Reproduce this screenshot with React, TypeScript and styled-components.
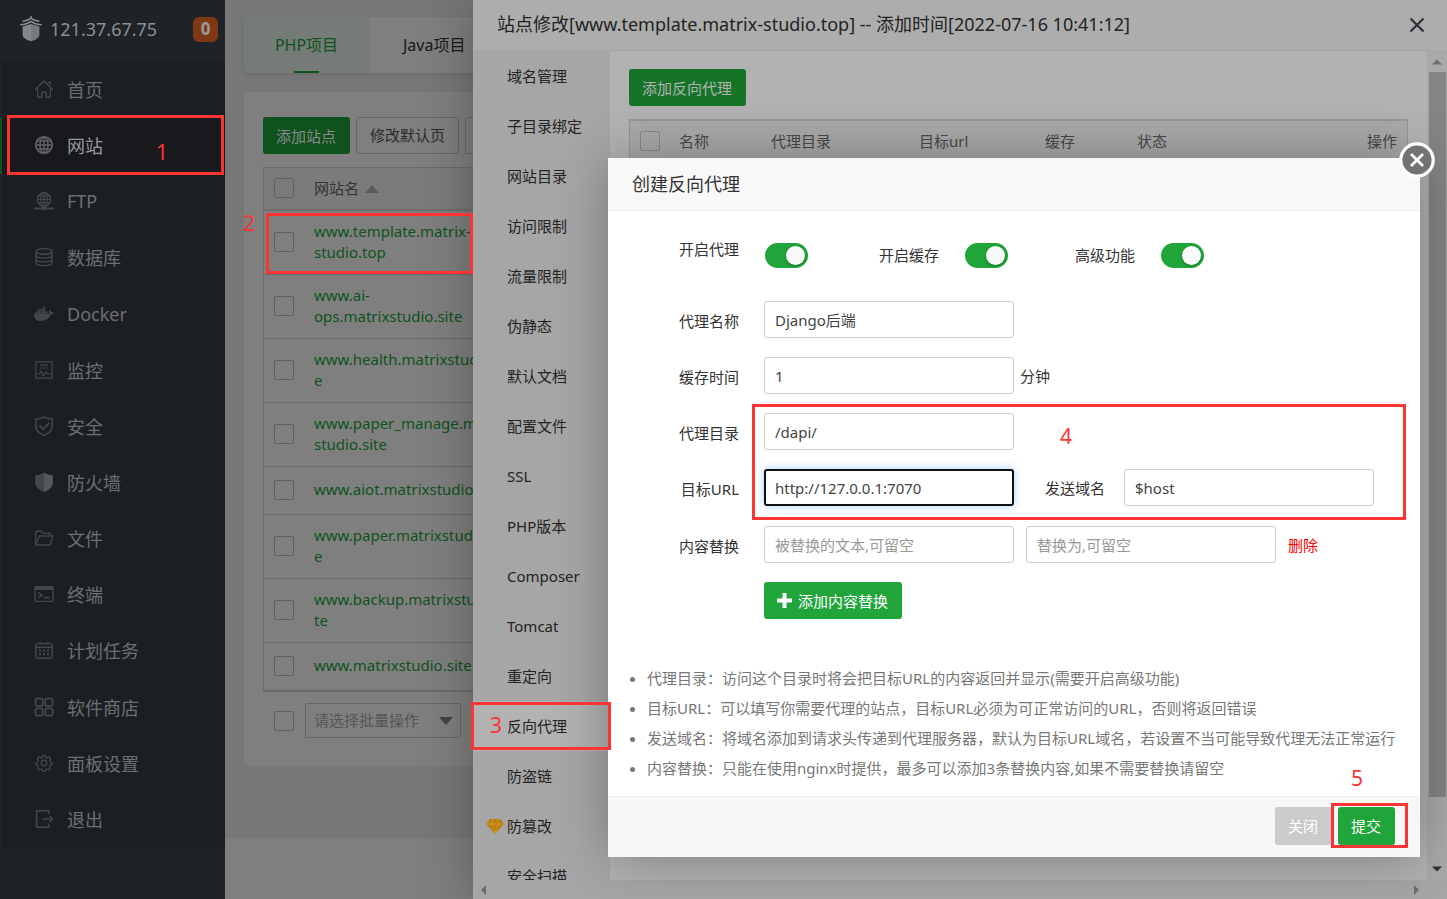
import React from "react";
import styled, { createGlobalStyle, css } from "styled-components";
import { FaDocker } from "react-icons/fa";

const GlobalStyle = createGlobalStyle`
  * { box-sizing: border-box; }
  body { margin: 0; background: #7f7f7f; }
  body, button, input, select {
    font-family: "Noto Sans", "Noto Sans CJK SC", sans-serif;
    font-size: 15px;
  }
  a { text-decoration: none; }
  ul { list-style: none; margin: 0; padding: 0; }
`;

const Screen = styled.div`
  position: relative;
  display: flex;
  height: 100vh;
  min-height: 860px;
  overflow: hidden;
`;

/* ---------- annotations ---------- */

const Frame = styled.span<{ $inset: string }>`
  position: absolute;
  z-index: 20;
  inset: ${(p) => p.$inset};
  border: 3px solid #fb3434;
  pointer-events: none;
`;

const Step = styled.span<{ $left: number; $top: number }>`
  position: absolute;
  z-index: 20;
  left: ${(p) => p.$left}px;
  top: ${(p) => p.$top}px;
  color: #fb3434;
  font-size: 21px;
  line-height: 28px;
  pointer-events: none;
`;

/* ---------- shared controls ---------- */

const Button = styled.button<{ $tone?: "green" | "greenMid" | "greenDark" | "grey" | "outline" }>`
  display: inline-flex;
  align-items: center;
  gap: 6px;
  height: 37px;
  padding: 0 14px 1px 13px;
  border: 0;
  border-radius: 3px;
  white-space: nowrap;
  color: #fff;
  background: #20a53a;
  ${(p) => p.$tone === "grey" && css`background: #cbcbcb;`}
  ${(p) => p.$tone === "greenMid" && css`background: #167429; color: #b2b2b2;`}
  ${(p) => p.$tone === "greenDark" && css`background: #10521d; color: #8a8a8a;`}
  ${(p) =>
    p.$tone === "outline" &&
    css`
      min-width: 87px;
      padding: 0 13px 2px 13px;
      background: transparent;
      border: 1px solid #666;
      color: #2b2b2b;
    `}
`;

const Check = styled.input.attrs({ type: "checkbox" })<{ $line?: string }>`
  appearance: none;
  display: block;
  flex: none;
  width: 20px;
  height: 20px;
  margin: 0;
  border: 1px solid ${(p) => p.$line ?? "#606060"};
  border-radius: 2px;
`;

/* ---------- sidebar ---------- */

const Sidebar = styled.aside`
  flex: none;
  width: 225px;
  background: #1e2327;
`;

const Brand = styled.header`
  display: flex;
  align-items: center;
  height: 62px;
  padding: 0 7px 4px 19px;
  color: #8d9093;
  font-size: 18px;
`;

const BrandName = styled.span`
  flex: 1;
  padding-left: 7px;
`;

const Badge = styled.span`
  width: 25px;
  height: 25px;
  border-radius: 6px;
  background: #7e3813;
  color: #999;
  font-size: 17px;
  font-weight: 700;
  line-height: 24px;
  text-align: center;
`;

const Menu = styled.ul`
  display: grid;
  grid-auto-rows: 1fr;
  height: 786px;
  margin-left: 2px;
  background: #1b1f24;
`;

const MenuItem = styled.li<{ $active?: boolean }>`
  position: relative;
  ${(p) => p.$active && css`background: #17191d; box-shadow: -2px 0 #10521d;`}
`;

const MenuLink = styled.a<{ $active?: boolean }>`
  display: flex;
  align-items: center;
  gap: 13px;
  height: 100%;
  padding: 0 0 2px 32px;
  font-size: 18px;
  color: ${(p) => (p.$active ? "#96989a" : "#6c6f72")};

  svg {
    flex: none;
    color: ${(p) => (p.$active ? "#606265" : "#43474b")};
  }
`;

const Glyph = ({ children }: { children: React.ReactNode }) => (
  <svg width="20" height="20" viewBox="0 0 20 20" fill="none" stroke="currentColor" strokeWidth="1.4" aria-hidden="true">
    {children}
  </svg>
);

const globeLines = (
  <>
    <ellipse cx="10" cy="10" rx="4" ry="8" />
    <path d="M10 2v16M2 10h16M3 6h14M3 14h14" />
  </>
);

const menu: { label: string; icon: React.ReactNode }[] = [
  {
    label: "首页",
    icon: <Glyph><path d="M1 10.8 10 2l9 8.8M3.6 9v9.2h4.2v-5h4.4v5h4.2V9M13.6 3.2h2.6v2.8" /></Glyph>,
  },
  {
    label: "网站",
    icon: <Glyph><circle cx="10" cy="10" r="8.2" strokeWidth="1.8" />{globeLines}</Glyph>,
  },
  {
    label: "FTP",
    icon: (
      <Glyph>
        <g transform="translate(1.8 .2) scale(.82)"><circle cx="10" cy="10" r="8.2" strokeWidth="1.8" />{globeLines}</g>
        <path d="M10 15v3M0 17.4h20" strokeWidth="1.8" /><path d="M7.5 17.4h5" strokeWidth="3.4" />
      </Glyph>
    ),
  },
  {
    label: "数据库",
    icon: (
      <Glyph>
        <ellipse cx="10" cy="4.4" rx="8" ry="2.8" />
        <path d="M2 4.4v11.4c0 1.6 3.6 2.8 8 2.8s8-1.2 8-2.8V4.4M2 8.2C2 9.8 5.6 11 10 11s8-1.2 8-2.8M2 12c0 1.6 3.6 2.8 8 2.8s8-1.2 8-2.8" />
      </Glyph>
    ),
  },
  { label: "Docker", icon: <FaDocker size={20} aria-hidden="true" /> },
  {
    label: "监控",
    icon: <Glyph><path d="M1.8 1.8h16.4v16.4H1.8zM6 5.2h8M6 8h8M2 14h3l2-2.6 2.4 4.4 2.4-3.6L14 14h4" strokeWidth="1.2" /></Glyph>,
  },
  {
    label: "安全",
    icon: (
      <Glyph>
        <path d="M10 1c2.400 1.300 5.400 2 8.200 2v7c0 4.600-3.600 7.600-8.200 9.400C5.400 17.600 1.800 14.600 1.800 10V3C4.600 3 7.600 2.300 10 1z" strokeWidth="1.600" />
        <path d="m5.400 9.400 3.800 3.800 6-6.400" strokeWidth="1.800" />
      </Glyph>
    ),
  },
  {
    label: "防火墙",
    icon: (
      <Glyph>
        <path d="M10 .4C8 2 4.600 3 1.200 3v8c0 4.400 4.400 7.400 8.800 9z" fill="#44474a" stroke="none" />
        <path d="M10 .4c2 1.600 5.400 2.600 8.800 2.600v8c0 4.400-4.400 7.400-8.800 9z" fill="#56595c" stroke="none" />
      </Glyph>
    ),
  },
  {
    label: "文件",
    icon: <Glyph><path d="M1.600 15.800V4.600l1.200-1.400h4.400l1.600 2.200h7.400v2.400M1.800 17h14.400l2.800-9H5.400L1.800 17z" /></Glyph>,
  },
  {
    label: "终端",
    icon: (
      <Glyph>
        <rect x="1" y="2.800" width="18" height="14.600" rx="1" />
        <path d="M1 4.400h18" strokeWidth="3" /><path d="m4.600 8.600 3.200 2.600-3.200 2.600M10 13.600h5" strokeWidth="1.600" />
      </Glyph>
    ),
  },
  {
    label: "计划任务",
    icon: (
      <Glyph>
        <rect x="1.800" y="3.600" width="16.400" height="14.600" rx="1.600" />
        <path d="M1.800 7.200h16.400M6 1.600v3M14 1.600v3" />
        <path d="M5 10.800h10M5 14.200h10" strokeWidth="2" strokeDasharray="2 2" />
      </Glyph>
    ),
  },
  {
    label: "软件商店",
    icon: (
      <Glyph>
        {[[1.6, 1.6], [11.4, 1.6], [1.6, 11.4], [11.4, 11.4]].map(([x, y]) => (
          <rect key={`${x}-${y}`} x={x} y={y} width="7.200" height="7.200" rx="1.400" strokeWidth="1.800" />
        ))}
      </Glyph>
    ),
  },
  {
    label: "面板设置",
    icon: (
      <Glyph>
        <path d="M8.600 1.600h2.800l.5 2.200 1.500.6 2-1.200 1.900 1.900-1.200 2 .6 1.500 2.200.5v2.800l-2.200.5-.6 1.500 1.200 2-1.900 1.900-2-1.200-1.500.6-.5 2.200H8.600l-.5-2.200-1.500-.6-2 1.200-1.900-1.900 1.200-2-.6-1.500-2.200-.5V9.100l2.200-.5.6-1.500-1.200-2 1.900-1.900 2 1.200 1.500-.6z" transform="translate(1 1) scale(.9)" />
        <circle cx="10" cy="10" r="2.800" />
      </Glyph>
    ),
  },
  {
    label: "退出",
    icon: <Glyph><path d="M15 5.200V1.800H2.600v16.400H15v-3.400M8.600 10h9.600M15.400 7l3 3-3 3" strokeWidth="1.500" /></Glyph>,
  },
];

const Logo = () => (
  <svg width="24" height="26" viewBox="0 0 24 26" aria-hidden="true">
    <path d="M12 0v3M12 2.400C9.600 4.200 7 5 3.600 5.200M12 2.400c2.400 1.800 5 2.600 8.400 2.800M12 5.400C9 7.600 5.400 8.600 1.200 8.800M12 5.400c3 2.200 6.600 3.200 10.800 3.400" fill="none" stroke="#8d9093" strokeWidth="1.500" />
    <path d="M12 8 3.600 10.400v8c0 3.600 4 5.400 8.400 6.800z" fill="#85878a" />
    <path d="m12 8 8.400 2.400v8c0 3.600-4 5.400-8.400 6.800z" fill="#777a7d" />
  </svg>
);

/* ---------- page behind the drawer ---------- */

const Main = styled.main`
  flex: 1;
  min-width: 0;
`;

const Canvas = styled.div`
  height: 838px;
  padding: 17px 19px 0;
  background: #777;
`;

const Tabs = styled.nav`
  display: flex;
  height: 56px;
  margin-bottom: 19px;
  border-radius: 5px;
  background: #7f7f7f;
  box-shadow: 0 2px 4px rgba(0, 0, 0, 0.1);
`;

const Tab = styled.a<{ $active?: boolean }>`
  position: relative;
  flex: none;
  padding: 0 34px;
  color: #191919;
  font-size: 16px;
  line-height: 56px;

  ${(p) =>
    p.$active &&
    css`
      width: 125px;
      padding: 0;
      text-align: center;
      border-radius: 5px 0 0 5px;
      background: #757b76;
      color: #10521d;

      &::after {
        content: "";
        position: absolute;
        bottom: 0;
        left: 50px;
        width: 25px;
        height: 2px;
        background: #10521d;
      }
    `}
`;

const Panel = styled.section`
  position: relative;
  height: 674px;
  padding: 25px 19px 0;
  border-radius: 5px;
  background: #7f7f7f;
`;

const Toolbar = styled.div`
  display: flex;
  gap: 6px;
  margin-bottom: 13px;
`;

const Sites = styled.table`
  width: 100%;
  border: 1px solid #6b6b6b;
  border-bottom-width: 2px;
  border-spacing: 0;
  text-align: left;

  th {
    height: 43px;
    padding: 0 0 2px;
    border-bottom: 2px solid #6f6f6f;
    background: #7b7b7b;
    color: #333;
    font-weight: 400;
  }

  td {
    position: relative;
    padding: 10px 0 11px;
    border-bottom: 1px solid #6b6b6b;
    line-height: 21px;
  }

  tr:last-child td {
    border-bottom: 0;
  }

  tr > :first-child {
    width: 50px;
    padding: 0 0 2px 10px;
  }

  a { color: #10521d; }
`;

const SingleCell = styled.td`
  && {
    padding: 12px 0 14px;
  }
`;

const SortMark = styled.svg`
  margin-left: 6px;
  vertical-align: 1px;
`;

const Batch = styled.div`
  display: flex;
  align-items: center;
  gap: 11px;
  padding: 11px;
`;

const SelectBox = styled.span`
  position: relative;

  svg {
    position: absolute;
    right: 8px;
    top: 14px;
    pointer-events: none;
  }
`;

const Select = styled.select`
  appearance: none;
  display: block;
  width: 156px;
  height: 35px;
  padding: 0 8px 2px;
  border: 1px solid #666;
  border-radius: 2px;
  background: transparent;
  color: #555;
`;

const sites: string[][] = [
  ["www.template.matrix-", "studio.top"],
  ["www.ai-", "ops.matrixstudio.site"],
  ["www.health.matrixstudio.sit", "e"],
  ["www.paper_manage.matrix", "studio.site"],
  ["www.aiot.matrixstudio.site"],
  ["www.paper.matrixstudio.sit", "e"],
  ["www.backup.matrixstudio.si", "te"],
  ["www.matrixstudio.site"],
];

/* ---------- drawer ---------- */

const Drawer = styled.section`
  position: absolute;
  top: 0;
  right: 0;
  bottom: 0;
  display: flex;
  flex-direction: column;
  width: 974px;
  background: #b2b2b2;
  box-shadow: 1px 1px 50px rgba(0, 0, 0, 0.3);
`;

const DrawerHead = styled.header`
  display: flex;
  align-items: center;
  justify-content: space-between;
  flex: none;
  height: 51px;
  padding: 0 22px 0 24px;
  border-bottom: 1px solid #a6a6a6;
  background: #adadad;
  color: #232323;
  font-size: 18px;
`;

const DrawerTitle = styled.span`
  padding-bottom: 4px;
`;

const PlainButton = styled.button`
  display: flex;
  padding: 0;
  border: 0;
  background: none;
`;

const DrawerBody = styled.div`
  display: flex;
  flex: 1;
  min-height: 0;
  overflow-x: visible;
  overflow-y: clip;
`;

const SideNav = styled.ul`
  flex: none;
  width: 137px;
  background: #a6a6a6;
`;

const SideItem = styled.li<{ $active?: boolean }>`
  position: relative;
  height: 50px;
  background: ${(p) => (p.$active ? "#b2b2b2" : "transparent")};

  a {
    display: block;
    padding-left: 34px;
    color: #232323;
    line-height: 50px;
  }

  svg {
    position: absolute;
    left: 13px;
    top: 18px;
  }
`;

const DrawerContent = styled.div`
  flex: 1;
  min-width: 0;
  padding: 18px 19px;
`;

const Proxies = styled.table`
  width: 100%;
  margin-top: 13px;
  border: 1px solid #959595;
  border-top-width: 2px;
  border-spacing: 0;
  text-align: left;

  th {
    height: 43px;
    padding: 0 0 4px;
    background: #a9a9a9;
    color: #484848;
    font-weight: 400;
  }

  th:first-child { padding-left: 10px; }
  th:last-child { padding-right: 10px; text-align: right; }
`;

const VScroll = styled.div`
  display: flex;
  flex: none;
  flex-direction: column;
  align-items: center;
  justify-content: space-between;
  width: 20px;
  padding: 6px 0;
  background: #a9a9a9;
`;

const Thumb = styled.span`
  width: 17px;
  height: 725px;
  margin: 5px 0 auto;
  background: #848484;
`;

const HScroll = styled.div`
  display: flex;
  flex: none;
  align-items: center;
  justify-content: space-between;
  height: 19px;
  padding: 0 28px 0 8px;
  background: #a6a6a6;
`;

const sideItems = [
  "域名管理", "子目录绑定", "网站目录", "访问限制", "流量限制", "伪静态", "默认文档", "配置文件", "SSL",
  "PHP版本", "Composer", "Tomcat", "重定向", "反向代理", "防盗链", "防篡改", "安全扫描",
];

/* ---------- dialog ---------- */

const Dialog = styled.section`
  position: absolute;
  top: 158px;
  right: 27px;
  width: 812px;
  background: #fff;
  box-shadow: 1px 1px 50px rgba(0, 0, 0, 0.3);
`;

const DialogHead = styled.header`
  height: 53px;
  padding-left: 24px;
  border-bottom: 1px solid #eee;
  background: #f8f8f8;
  color: #333;
  font-size: 18px;
  line-height: 52px;
`;

const DialogClose = styled(PlainButton)`
  position: absolute;
  top: -16px;
  right: -15px;
`;

const Form = styled.form`
  display: flex;
  flex-direction: column;
  gap: 19px;
  padding-top: 20px;
  color: #333;
`;

const Row = styled.div`
  display: flex;
  align-items: center;
  height: 37px;
`;

const SwitchRow = styled(Row)`
  align-items: flex-end;
  margin-bottom: 14px;
  line-height: 37px;
`;

const SwitchGrid = styled.div`
  display: grid;
  grid-template-columns: 115px 196px auto;
  line-height: 25px;
`;

const SwitchItem = styled.div`
  display: flex;
  gap: 25px;
`;

const Label = styled.label`
  flex: none;
  width: 131px;
  margin-right: 25px;
  text-align: right;
`;

const FieldLabel = styled(Label)`
  line-height: 24px;
  padding-top: 3px;
`;

const HostLabel = styled.label`
  margin: 0 19px 0 31px;
`;

const Unit = styled.span`
  margin-left: 6px;
`;

const Field = styled.input<{ $focused?: boolean }>`
  width: 250px;
  height: 37px;
  padding: 0 10px;
  border: 1px solid #ccc;
  border-radius: 3px;
  background: #fff;
  color: #444;
  outline: 0;

  &::placeholder { color: #999; }

  & + & { margin-left: 12px; }

  ${(p) =>
    p.$focused &&
    css`
      padding: 0 9px;
      border: 2px solid #101010;
      box-shadow: 0 0 9px rgba(102, 175, 233, 0.6);
    `}
`;

const Switch = styled.input.attrs({ type: "checkbox" })`
  appearance: none;
  position: relative;
  flex: none;
  width: 43px;
  height: 25px;
  margin: 0 0 0 1px;
  border-radius: 13px;
  background: #20a53a;

  &::before {
    content: "";
    position: absolute;
    top: 3px;
    right: 3px;
    width: 19px;
    height: 19px;
    border-radius: 50%;
    background: #fafafa;
    box-shadow: 0 1px 3px rgba(0, 0, 0, 0.3);
  }
`;

const Delete = styled.a`
  margin-left: 12px;
  color: #f00;
`;

const Group = styled.div`
  position: relative;
  display: flex;
  flex-direction: column;
  gap: 19px;
  padding-bottom: 1px;
`;

const AddRow = styled.div`
  padding-left: 156px;
`;

const Notes = styled.ul`
  margin: 44px 0 13px;
  padding-left: 39px;
  list-style: disc;
  color: #777;
  line-height: 30px;
`;

const DialogFoot = styled.footer`
  display: flex;
  justify-content: flex-end;
  gap: 6px;
  height: 61px;
  padding: 10px 25px 0 0;
  border-top: 1px solid #edf1f2;
  background: #f6f8f8;

  button { height: 38px; }
`;

const Anchor = styled.span`
  position: relative;
  height: 38px;
`;

const Arrow = ({ d, color }: { d: string; color: string }) => (
  <svg width="10" height="10" viewBox="0 0 10 10" aria-hidden="true"><path d={d} fill={color} /></svg>
);

export default function App() {
  return (
    <Screen>
      <GlobalStyle />
      <Sidebar>
        <Brand>
          <Logo />
          <BrandName>121.37.67.75</BrandName>
          <Badge>0</Badge>
        </Brand>
        <Menu>
          {menu.map(({ label, icon }) => {
            const active = label === "网站";
            return (
              <MenuItem key={label} $active={active}>
                <MenuLink href="#" $active={active}>{icon}{label}</MenuLink>
                {active && <><Frame $inset="-3px 1px -1px 5px" /><Step $left={154} $top={20}>1</Step></>}
              </MenuItem>
            );
          })}
        </Menu>
      </Sidebar>

      <Main>
        <Canvas>
          <Tabs>
            <Tab href="#" $active>PHP项目</Tab>
            <Tab href="#">Java项目</Tab>
          </Tabs>
          <Panel>
            <Step $left={-1} $top={117}>2</Step>
            <Toolbar>
              <Button $tone="greenDark">添加站点</Button>
              <Button $tone="outline">修改默认页</Button>
              <Button $tone="outline" aria-label="默认站点" />
            </Toolbar>
            <Sites>
              <thead>
                <tr>
                  <th><Check aria-label="全选" /></th>
                  <th>
                    网站名
                    <SortMark width="14" height="8" viewBox="0 0 14 8" aria-hidden="true"><path d="M0 8 7 0l7 8z" fill="#5a5a5a" /></SortMark>
                  </th>
                </tr>
              </thead>
              <tbody>
                {sites.map((lines, i) => {
                  const Cell = lines.length > 1 ? "td" : SingleCell;
                  return (
                    <tr key={lines[0]}>
                      <td>
                        <Check aria-label={lines.join("")} />
                        {i === 0 && <Frame $inset="2px -159px 0 2px" />}
                      </td>
                      <Cell>
                        <a href="#">{lines[0]}{lines[1] && <><br />{lines[1]}</>}</a>
                      </Cell>
                    </tr>
                  );
                })}
              </tbody>
            </Sites>
            <Batch>
              <Check aria-label="选择全部站点" />
              <SelectBox>
                <Select aria-label="批量操作"><option>请选择批量操作</option></Select>
                <svg width="14" height="8" viewBox="0 0 14 8" aria-hidden="true"><path d="M0 0h14L7 8z" fill="#444" /></svg>
              </SelectBox>
            </Batch>
          </Panel>
        </Canvas>
      </Main>

      <Drawer>
        <DrawerHead>
          <DrawerTitle>站点修改[www.template.matrix-studio.top] -- 添加时间[2022-07-16 10:41:12]</DrawerTitle>
          <PlainButton aria-label="关闭窗口">
            <svg width="16" height="16" viewBox="0 0 16 16" aria-hidden="true"><path d="m1.500 1.500 13 13m0-13-13 13" stroke="#2d2e37" strokeWidth="2.200" /></svg>
          </PlainButton>
        </DrawerHead>
        <DrawerBody>
          <SideNav>
            {sideItems.map((label) => (
              <SideItem key={label} $active={label === "反向代理"}>
                {label === "防篡改" && (
                  <svg width="18" height="16" viewBox="0 0 18 16" aria-hidden="true">
                    <path d="M3.500 0h11L18 5 9 15 0 5z" fill="#bd800e" />
                    <path d="M0 5h18M5.500 5 9 14l3.500-9M5.500 5 7 .5M12.500 5 11 .5" fill="none" stroke="#d0a040" strokeWidth=".7" />
                  </svg>
                )}
                <a href="#">{label}</a>
                {label === "反向代理" && <><Frame $inset="1px -1px 1px -2px" /><Step $left={17} $top={10}>3</Step></>}
              </SideItem>
            ))}
          </SideNav>
          <DrawerContent>
            <Button $tone="greenMid">添加反向代理</Button>
            <Proxies>
              <colgroup>
                <col width="49" /><col width="92" /><col width="148" /><col width="126" /><col width="92" /><col />
              </colgroup>
              <thead>
                <tr>
                  <th><Check $line="#878787" aria-label="全选代理" /></th>
                  <th>名称</th><th>代理目录</th><th>目标url</th><th>缓存</th><th>状态</th><th>操作</th>
                </tr>
              </thead>
            </Proxies>
          </DrawerContent>
          <VScroll>
            <Arrow d="M0 7.500 5 2.500l5 5z" color="#6c6c6c" />
            <Thumb />
            <Arrow d="M0 2.500h10l-5 5z" color="#333" />
          </VScroll>
        </DrawerBody>
        <HScroll>
          <Arrow d="M5 0v10L0 5z" color="#6c6c6c" />
          <Arrow d="M5 0v10l5-5z" color="#6c6c6c" />
        </HScroll>
      </Drawer>

      <Dialog role="dialog" aria-label="创建反向代理">
        <DialogHead>创建反向代理</DialogHead>
        <DialogClose aria-label="关闭弹窗">
          <svg width="36" height="36" viewBox="0 0 36 36" aria-hidden="true">
            <circle cx="18" cy="18" r="16.200" fill="#737373" stroke="#fff" strokeWidth="3.200" />
            <path d="m12 12 12 12m0-12L12 24" stroke="#fff" strokeWidth="2.800" />
          </svg>
        </DialogClose>
        <Form onSubmit={(e) => e.preventDefault()}>
          <SwitchRow>
            <Label htmlFor="open">开启代理</Label>
            <SwitchGrid>
              <SwitchItem><Switch id="open" defaultChecked /></SwitchItem>
              <SwitchItem><label htmlFor="cache">开启缓存</label><Switch id="cache" defaultChecked /></SwitchItem>
              <SwitchItem><label htmlFor="advanced">高级功能</label><Switch id="advanced" defaultChecked /></SwitchItem>
            </SwitchGrid>
          </SwitchRow>
          <Row>
            <FieldLabel htmlFor="name">代理名称</FieldLabel>
            <Field id="name" defaultValue="Django后端" />
          </Row>
          <Row>
            <FieldLabel htmlFor="time">缓存时间</FieldLabel>
            <Field id="time" defaultValue="1" />
            <Unit>分钟</Unit>
          </Row>
          <Group>
            <Frame $inset="-9px 14px -13px 144px" />
            <Step $left={452} $top={9}>4</Step>
            <Row>
              <FieldLabel htmlFor="dir">代理目录</FieldLabel>
              <Field id="dir" defaultValue="/dapi/" />
            </Row>
            <Row>
              <FieldLabel htmlFor="url">目标URL</FieldLabel>
              <Field id="url" defaultValue="http://127.0.0.1:7070" $focused />
              <HostLabel htmlFor="host">发送域名</HostLabel>
              <Field id="host" defaultValue="$host" />
            </Row>
          </Group>
          <Row>
            <FieldLabel htmlFor="from">内容替换</FieldLabel>
            <Field id="from" placeholder="被替换的文本,可留空" />
            <Field aria-label="替换为" placeholder="替换为,可留空" />
            <Delete href="#">删除</Delete>
          </Row>
          <AddRow>
            <Button type="button">
              <svg width="15" height="15" viewBox="0 0 15 15" aria-hidden="true"><path d="M7.500 0v15M0 7.500h15" stroke="#fff" strokeWidth="4" /></svg>
              添加内容替换
            </Button>
          </AddRow>
        </Form>
        <Notes>
          <li>代理目录：访问这个目录时将会把目标URL的内容返回并显示(需要开启高级功能)</li>
          <li>目标URL：可以填写你需要代理的站点，目标URL必须为可正常访问的URL，否则将返回错误</li>
          <li>发送域名：将域名添加到请求头传递到代理服务器，默认为目标URL域名，若设置不当可能导致代理无法正常运行</li>
          <li>内容替换：只能在使用nginx时提供，最多可以添加3条替换内容,如果不需要替换请留空</li>
        </Notes>
        <DialogFoot>
          <Button $tone="grey">关闭</Button>
          <Anchor>
            <Button>提交</Button>
            <Frame $inset="-4px -13px -3px -7px" />
            <Step $left={13} $top={-43}>5</Step>
          </Anchor>
        </DialogFoot>
      </Dialog>
    </Screen>
  );
}
